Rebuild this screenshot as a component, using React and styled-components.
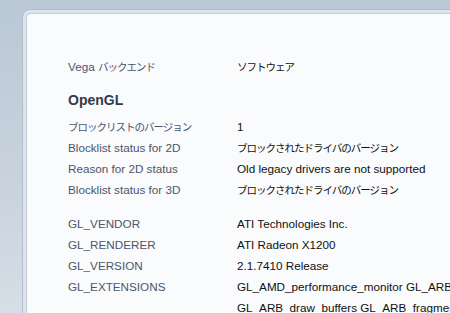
import React from "react";
import styled, { createGlobalStyle } from "styled-components";

const GlobalStyle = createGlobalStyle`
  html, body {
    margin: 0;
    padding: 0;
    height: 100%;
    overflow: hidden;
  }
  body {
    background: linear-gradient(to bottom, #bac8d5 0%, #c9d3de 60%, #d6dee7 100%);
    font-family: "Liberation Sans", Arial, "Noto Sans CJK JP", sans-serif;
  }
`;

const Page = styled.div`
  padding: 9px 0 0 22px;
  width: 700px;
`;

const Frame = styled.div`
  border: 1px solid #b3bfcc;
  border-right: none;
  border-bottom: none;
  border-radius: 8px 0 0 0;
  background: #dde3ea;
  padding: 3px 0 0 3px;
`;

const Card = styled.div`
  border: 1px solid #c3ccd6;
  border-right: none;
  border-bottom: none;
  border-radius: 5px 0 0 0;
  background: #fafbfd;
  padding: 42px 0 40px 41px;
  min-height: 400px;
`;

const Table = styled.div`
  display: grid;
  grid-template-columns: 169px 480px;
  margin-bottom: ${(p) => p.$gap || 0}px;
`;

const Label = styled.div`
  font-size: 11.7px;
  line-height: 21px;
  color: #4c566a;
`;

const Value = styled.div`
  font-size: 11.7px;
  line-height: 21px;
  color: #111;
`;

const Jp = styled.span`
  font-family: "Noto Sans CJK JP", sans-serif;
  font-size: 10.5px;
  letter-spacing: -1px;
`;

const Heading = styled.h2`
  margin: 13px 0 6px;
  font-size: 14px;
  line-height: 20px;
  font-weight: bold;
  color: #353b47;
`;

const Rows = ({ rows, gap }) => (
  <Table $gap={gap}>
    {rows.map(([k, v], i) => (
      <React.Fragment key={i}>
        <Label>{k}</Label>
        <Value>{v}</Value>
      </React.Fragment>
    ))}
  </Table>
);

const blocked = <Jp>ブロックされたドライバのバージョン</Jp>;

export default function App() {
  return (
    <>
      <GlobalStyle />
      <Page>
        <Frame>
          <Card>
            <Rows
              rows={[
                [
                  <>
                    Vega <Jp>バックエンド</Jp>
                  </>,
                  <Jp>ソフトウェア</Jp>,
                ],
              ]}
            />
            <Heading>OpenGL</Heading>
            <Rows
              gap={13}
              rows={[
                [<Jp>ブロックリストのバージョン</Jp>, "1"],
                ["Blocklist status for 2D", blocked],
                ["Reason for 2D status", "Old legacy drivers are not supported"],
                ["Blocklist status for 3D", blocked],
              ]}
            />
            <Rows
              rows={[
                ["GL_VENDOR", "ATI Technologies Inc."],
                ["GL_RENDERER", "ATI Radeon X1200"],
                ["GL_VERSION", "2.1.7410 Release"],
                [
                  "GL_EXTENSIONS",
                  "GL_AMD_performance_monitor GL_ARB_color_buffer_float GL_ARB_depth_texture GL_ARB_draw_buffers GL_ARB_fragment_program GL_ARB_fragment_shader",
                ],
              ]}
            />
          </Card>
        </Frame>
      </Page>
    </>
  );
}
